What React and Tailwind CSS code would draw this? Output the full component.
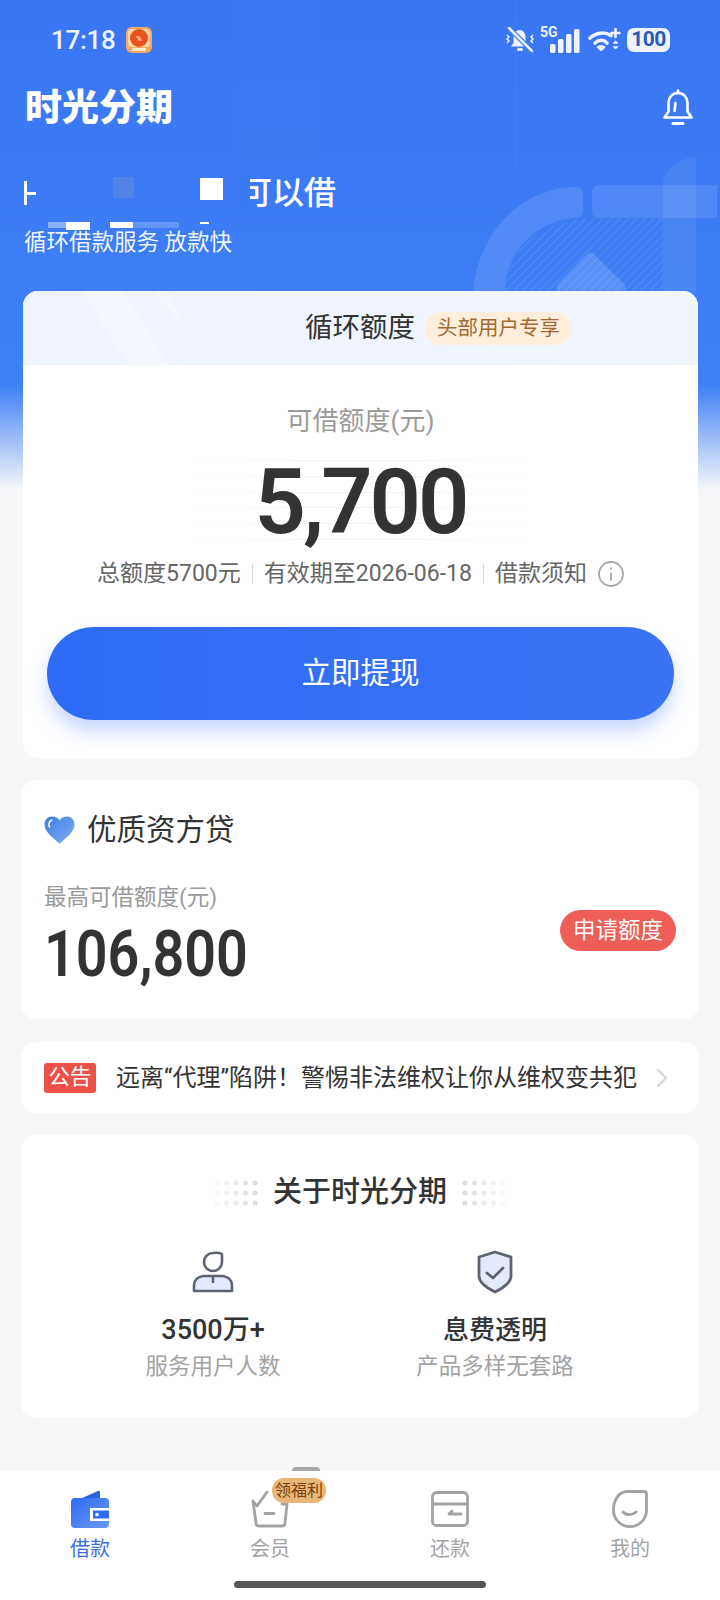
import React from 'react';

const gray = '#a3a3a3';

const AppIcon = () => (
  <svg width="26" height="26" viewBox="0 0 26 26">
    <rect width="26" height="26" rx="6" fill="#f6a95a" />
    <rect x="2" y="2" width="22" height="18" rx="4" fill="#fbd9ae" />
    <circle cx="13" cy="11" r="9" fill="#e9501c" />
    <text x="13" y="14" fontSize="8" fill="#fff" textAnchor="middle" fontFamily="Roboto">%</text>
    <rect x="6" y="21" width="14" height="3" rx="1" fill="#fde9cf" />
  </svg>
);

const MuteBell = () => (
  <svg width="30" height="27" viewBox="0 0 30 27" fill="#eef3ff">
    <path d="M15 3c-4 0-6.500 3-6.500 7v6l-2.500 3.500h17L20.500 16v-6c0-4-2.500-7-5.500-7z" />
    <rect x="12" y="21" width="6" height="3" rx="1.500" />
    <path d="M4 1l23 23" stroke="#3a76f4" strokeWidth="5" />
    <path d="M4 1l23 23" stroke="#eef3ff" strokeWidth="2.500" strokeLinecap="round" />
    <path d="M2 8l2 2-2 2 2 2-2 2M28 8l-2 2 2 2-2 2 2 2" fill="none" stroke="#eef3ff" strokeWidth="1.500" />
  </svg>
);

const Signal = () => (
  <svg width="30" height="24" viewBox="0 0 30 24" fill="#eef3ff">
    <rect x="0" y="15" width="5.500" height="9" rx="1.500" />
    <rect x="8" y="10" width="5.500" height="14" rx="1.500" />
    <rect x="16" y="5" width="5.500" height="19" rx="1.500" />
    <rect x="24" y="0" width="5.500" height="24" rx="1.500" />
  </svg>
);

const Wifi = () => (
  <svg width="33" height="25" viewBox="0 0 33 25" fill="none" stroke="#eef3ff" strokeLinecap="round">
    <path d="M2 10c6-5.500 15-6.500 21-2.500" strokeWidth="3.600" />
    <path d="M7 15c4-3.500 8.500-3.500 12 0" strokeWidth="3.600" />
    <path d="M13 22.500l-3.600-3.400c2.200-1.600 5-1.600 7.200 0z" fill="#eef3ff" strokeWidth="1.500" strokeLinejoin="round" />
    <path d="M27.500 1v8M23.500 5h8" strokeWidth="2.600" />
    <path d="M25.500 15l2-2 2 2zM25.500 19l2 2 2-2z" fill="#eef3ff" strokeWidth="1" />
  </svg>
);

const Bell = () => (
  <svg width="32" height="37" viewBox="0 0 32 37" fill="none" stroke="#fff" strokeWidth="2.600" strokeLinecap="round" strokeLinejoin="round">
    <path d="M16 1.500v2.500" />
    <path d="M16 4c-6 0-9.500 4.500-9.500 10.500v8L2.500 28.500h27l-4-6v-8C25.500 8.500 22 4 16 4z" />
    <path d="M13.500 14l-1 8" />
    <path d="M11 34.500h10" strokeWidth="3" />
  </svg>
);

const Heart = () => (
  <svg width="31" height="28" viewBox="0 0 31 28">
    <defs>
      <linearGradient id="heart" x1="0" y1="0" x2="1" y2="1">
        <stop offset="0" stopColor="#3f7be8" />
        <stop offset="1" stopColor="#7fb0f2" />
      </linearGradient>
    </defs>
    <path d="M15.500 27.500C9 22 .5 16 .5 8.500.5 3.500 4 .5 8 .5c3.500 0 6 1.500 7.500 4 1.500-2.500 4-4 7.500-4 4 0 7.500 3 7.500 8 0 7.500-8.500 13.500-15 19z" fill="url(#heart)" />
    <path d="M8 4C5 5 4 8.500 5.500 11" fill="none" stroke="#fff" strokeWidth="1.500" strokeLinecap="round" />
  </svg>
);

const Dots = ({ reverse }) => (
  <svg width="44" height="26" viewBox="0 0 44 26" fill="#d9d9d9">
    {[0, 1, 2].map((row) =>
      [0, 1, 2, 3, 4].map((col) => (
        <circle
          key={`${row}-${col}`}
          cx={3 + col * 9.500}
          cy={3 + row * 10}
          r="2.500"
          opacity={reverse ? 0.9 - col * 0.18 : 0.18 + col * 0.18}
        />
      ))
    )}
  </svg>
);

const UserIcon = () => (
  <svg width="42" height="42" viewBox="0 0 42 42" fill="none" stroke="#5d6470" strokeWidth="2.600" strokeLinejoin="round">
    <path d="M3 31c3-5 7-6 18-6s15 1 18 6v6c0 2-1 3-3 3H6c-2 0-3-1-3-3z" fill="#e3eafb" stroke="none" />
    <path d="M2 40v-6c0-5 4-8 9-9h20c5 1 9 4 9 9v6z" />
    <path d="M21 25v7" />
    <path d="M21 2c5-.500 9 0 9 2v7c0 5-4 9-9 9s-9-4-9-9 4-9 9-9z" fill="#fff" />
  </svg>
);

const ShieldIcon = () => (
  <svg width="36" height="44" viewBox="0 0 36 44" fill="none" stroke="#5d6470" strokeWidth="2.800" strokeLinejoin="round" strokeLinecap="round">
    <path d="M18 2L34 7v19c0 7-8 12-16 16C10 38 2 33 2 26V7z" fill="#e3eafb" />
    <path d="M10 23l6 5 10-10" />
  </svg>
);

const WalletIcon = () => (
  <svg width="40" height="38" viewBox="0 0 40 38">
    <defs>
      <linearGradient id="wallet" x1="0" y1="0" x2="1" y2="1">
        <stop offset="0" stopColor="#2f6cf3" />
        <stop offset="1" stopColor="#6a98f5" />
      </linearGradient>
    </defs>
    <path d="M10 9L28 1c1.500-.500 2 .500 2 2v7z" fill="#2c62df" />
    <rect x="1" y="8" width="38" height="30" rx="4" fill="url(#wallet)" />
    <rect x="20" y="18" width="19" height="13" fill="#fff" />
    <rect x="23" y="20.500" width="16" height="8" fill="#2f6cf3" />
    <circle cx="27" cy="24.500" r="1.800" fill="#fff" />
  </svg>
);

const BasketIcon = () => (
  <svg width="40" height="38" viewBox="0 0 40 38" fill="none" stroke={gray} strokeWidth="2.800" strokeLinecap="round" strokeLinejoin="round">
    <path d="M3 11l4 5 10-14M32 14h5l-2 19c0 2-1.500 3-3 3H9c-2 0-3-1-3-3L3 11" />
    <path d="M15 23.500h9" />
  </svg>
);

const RepayIcon = () => (
  <svg width="38" height="36" viewBox="0 0 38 36" fill="none" stroke={gray} strokeWidth="2.800" strokeLinecap="round" strokeLinejoin="round">
    <rect x="1.500" y="1.500" width="35" height="33" rx="4" />
    <path d="M1.500 13h35" />
    <path d="M18 23h12M21 20l-3 3" />
  </svg>
);

const FaceIcon = () => (
  <svg width="36" height="38" viewBox="0 0 36 38" fill="none" stroke={gray} strokeWidth="2.800" strokeLinecap="round" strokeLinejoin="round">
    <path d="M15 1.500h17c1.500 0 2.500 1 2.500 2.500v16c0 9-7 16.500-16.500 16.500S1.500 29 1.500 20 6.500 1.500 15 1.500z" />
    <path d="M11 22c3 3.500 9 3.500 13 0" />
  </svg>
);

const tabs = [
  { label: '借款', icon: <WalletIcon />, active: true },
  { label: '会员', icon: <BasketIcon /> },
  { label: '还款', icon: <RepayIcon /> },
  { label: '我的', icon: <FaceIcon /> },
];

const stripes = [0, 1, 2, 3, 4, 5];

const App = () => {
  return (
    <div className="relative flex flex-col w-[720px] h-[1600px] overflow-hidden bg-[linear-gradient(180deg,#3a76f4_0px,#3e80f6_385px,#f6f7f9_490px)] font-['Roboto','Noto_Sans_CJK_SC',sans-serif] text-[#333]">
      {/* Banner decoration */}
      <div className="absolute left-[234px] top-0 w-[86px] h-[160px] bg-white/[0.012]" />
      <div className="absolute left-[515px] top-0 w-px h-[170px] bg-white/[0.04]" />
      <svg className="absolute left-[470px] top-[155px]" width="250" height="140" viewBox="0 0 250 140" fill="#fff">
        <defs>
          <pattern id="hatch" width="6" height="6" patternUnits="userSpaceOnUse" patternTransform="rotate(45)">
            <rect width="2" height="6" fill="#fff" opacity=".07" />
          </pattern>
        </defs>
        <path d="M35 136C37 98 68 65 122 63h71v73z" fill="url(#hatch)" />
        <path d="M3 136C8 75 55 32 105 32c5 0 8 3 8 7v17c0 4-3 7-8 7-34 2-69 30-70 73H3z" opacity=".11" />
        <path d="M129 30h118v33H129c-4 0-7-3-7-7V37c0-4 3-7 7-7z" opacity=".1" />
        <path d="M193 30c0-12 8-22 29-28 3-1 4 1 4 5v133h-33z" opacity=".07" />
        <path d="M87 130l29-30c3-3 6-3 9 0l30 30v6H87z" opacity=".14" />
      </svg>

      {/* Status bar */}
      <div className="relative flex items-center h-[80px] pl-[51px] pr-[50px] text-[#eef3ff]">
        <span className="text-[26px] font-medium tracking-[-0.3px]">17:18</span>
        <div className="ml-[11px]">
          <AppIcon />
        </div>
        <div className="flex items-center ml-auto">
          <MuteBell />
          <div className="relative ml-[15px] mt-[2px]">
            <Signal />
            <span className="absolute left-[-10px] top-[-4px] text-[14px] leading-[14px] font-bold">5G</span>
          </div>
          <div className="ml-[8px]">
            <Wifi />
          </div>
          <div className="flex items-center justify-center ml-[6px] w-[43px] h-[24px] rounded-[7px] bg-[#eef3ff] text-[21px] font-bold text-[#2a5ab8] tracking-[-0.5px]">
            100
          </div>
        </div>
      </div>

      {/* App header */}
      <div className="relative flex items-center justify-between h-[54px] pl-[25px] pr-[26px]">
        <span className="mt-[3px] text-[37px] leading-[44px] font-black text-white">时光分期</span>
        <Bell />
      </div>

      {/* Headline, partly covered */}
      <div className="relative flex items-center h-[40px] mt-[39px] pl-[240px] text-[32px] font-medium text-white">
        <span>可以借</span>
        <div className="absolute left-[236px] top-0 w-[14px] h-[40px] bg-[#3b7af5]" />
        <div className="absolute left-[24px] top-[8px] flex items-center">
          <div className="w-[3px] h-[24px] bg-white" />
          <div className="w-[9px] h-[3px] bg-white" />
        </div>
        <div className="absolute left-[113px] top-[4px] w-[21px] h-[21px] bg-[#5483e6]" />
        <div className="absolute left-[200px] top-[5px] w-[23px] h-[22px] bg-white" />
      </div>

      <div className="relative h-[30px] mt-[14px] pl-[24px] text-[22.500px] leading-[30px] text-white/95">
        循环借款服务 放款快
        <div className="absolute left-[48px] top-[-5px] w-[18px] h-[6px] bg-white/40" />
        <div className="absolute left-[66px] top-[-5px] w-[24px] h-[8px] bg-white" />
        <div className="absolute left-[110px] top-[-5px] w-[23px] h-[6px] bg-white" />
        <div className="absolute left-[133px] top-[-5px] w-[46px] h-[6px] bg-white/20" />
        <div className="absolute left-[200px] top-[-5px] w-[9px] h-[2px] bg-white" />
      </div>

      {/* Credit card */}
      <div className="relative ml-[23px] w-[675px] mt-[34px] overflow-hidden rounded-[15px] bg-white">
        <div className="relative flex items-center h-[74px] pl-[282px] gap-[10px] bg-[linear-gradient(90deg,#eef3fd,#f1f5fe)]">
          <svg className="absolute left-0 top-0" width="180" height="74" viewBox="0 0 180 74" fill="#fff">
            <path d="M60 0h40l45 74H105z" opacity=".35" />
            <path d="M130 0h14l20 40z" opacity=".3" />
          </svg>
          <span className="relative text-[27.500px] text-[#333]">循环额度</span>
          <span className="relative flex items-center justify-center w-[147px] h-[33px] rounded-full bg-[#fdeedc] text-[20.500px] text-[#a5692e]">
            头部用户专享
          </span>
        </div>
        <div className="mt-[39px] text-center text-[26px] leading-[34px] text-[#9a9a9a]">可借额度(元)</div>
        <div className="relative mt-[17px] h-[90px]">
          <div className="absolute left-[168px] right-[168px] top-[5px] bottom-[5px] flex flex-col justify-between">
            {stripes.map((line) => (
              <div key={line} className="h-px bg-[linear-gradient(90deg,transparent,#efefef,transparent)]" />
            ))}
          </div>
          <div className="relative pt-[3px] text-center text-[90px] leading-[90px] font-semibold tracking-[-3px] text-[#333]">5,700</div>
        </div>
        <div className="flex items-center justify-center mt-[14px] h-[30px] text-[23px] text-[#666]">
          <span>总额度5700元</span>
          <div className="w-px h-[20px] mx-[11px] bg-[#d5d5d5]" />
          <span>有效期至2026-06-18</span>
          <div className="w-px h-[20px] mx-[11px] bg-[#d5d5d5]" />
          <span>借款须知</span>
          <svg className="ml-[11px]" width="26" height="26" viewBox="0 0 26 26" fill="none" stroke="#a8a8a8" strokeWidth="1.800">
            <circle cx="13" cy="13" r="12" />
            <path d="M13 11.500v8M13 6.500v2" />
          </svg>
        </div>
        <div className="mx-[24px] mt-[38px] mb-[38px] flex items-center justify-center h-[93px] rounded-full bg-[linear-gradient(90deg,#2e6bf6,#3a74f5)] shadow-[0_12px_18px_rgba(60,115,240,0.28)] text-[29.500px] text-white">
          立即提现
        </div>
      </div>

      {/* Partner loan */}
      <div className="ml-[21px] w-[678px] mt-[22px] h-[239px] pt-[30px] pl-[23px] pr-[23px] rounded-[15px] bg-white">
        <div className="flex items-center h-[40px] gap-[12px]">
          <Heart />
          <span className="text-[29.500px] text-[#333]">优质资方贷</span>
        </div>
        <div className="flex items-center justify-between mt-[32px]">
          <div>
            <div className="h-[30px] text-[22.500px] leading-[30px] text-[#9a9a9a]">最高可借额度(元)</div>
            <div className="mt-[8px] h-[70px] origin-left scale-x-[0.87] text-[64px] leading-[70px] font-semibold text-[#333]">106,800</div>
          </div>
          <div className="flex items-center justify-center w-[116px] h-[41px] mb-[11px] rounded-full bg-[#ee5d56] text-[22.500px] text-white">
            申请额度
          </div>
        </div>
      </div>

      {/* Notice */}
      <div className="flex items-center ml-[21px] w-[678px] mt-[23px] h-[71px] pl-[23px] rounded-[15px] bg-white">
        <span className="flex items-center justify-center w-[52px] h-[30px] rounded-[3px] bg-[#ec5049] text-[21.500px] text-white">公告</span>
        <span className="ml-[20px] text-[24px] text-[#333] whitespace-nowrap">远离“代理”陷阱！警惕非法维权让你从维权变共犯</span>
        <svg className="ml-[19px]" width="12" height="20" viewBox="0 0 12 20" fill="none" stroke="#d8d8d8" strokeWidth="2.400" strokeLinecap="round" strokeLinejoin="round">
          <path d="M2 2l8 8-8 8" />
        </svg>
      </div>

      {/* About */}
      <div className="ml-[21px] w-[678px] mt-[22px] h-[283px] pt-[38px] rounded-[15px] bg-white">
        <div className="flex items-center justify-center h-[40px] gap-[15px] text-[29px] font-medium text-[#333]">
          <Dots />
          <span>关于时光分期</span>
          <Dots reverse />
        </div>
        <div className="grid grid-cols-2 mt-[37px] pl-[51px] pr-[63px] text-center">
          {[
            { icon: <UserIcon />, title: '3500万+', titleSize: 'text-[27px]', desc: '服务用户人数' },
            { icon: <ShieldIcon />, title: '息费透明', titleSize: 'text-[26px]', desc: '产品多样无套路' },
          ].map((item) => (
            <div key={item.desc} className="flex flex-col items-center">
              <div className="flex items-center justify-center h-[44px]">{item.icon}</div>
              <div className={`mt-[19px] h-[34px] leading-[34px] font-medium text-[#333] ${item.titleSize}`}>{item.title}</div>
              <div className="mt-[4px] h-[30px] text-[22.500px] leading-[30px] text-[#a3a3a3]">{item.desc}</div>
            </div>
          ))}
        </div>
      </div>

      <div className="flex-1" />

      {/* Tab bar */}
      <div className="relative h-[129px] bg-white">
        <div className="absolute left-[292px] top-[-4px] w-[28px] h-[4px] rounded-t-[6px] bg-[#a8a8a8]" />
        <div className="grid grid-cols-4 pt-[18px]">
          {tabs.map((tab) => (
            <div key={tab.label} className="flex flex-col items-center">
              <div className="flex items-center justify-center h-[40px]">{tab.icon}</div>
              <span className={`mt-[6px] text-[20px] leading-[28px] ${tab.active ? 'text-[#3a6fe0]' : 'text-[#a3a3a3]'}`}>{tab.label}</span>
            </div>
          ))}
        </div>
        <div className="absolute left-[272px] top-[7px] flex items-center justify-center w-[54px] h-[25px] rounded-[12px] bg-[#e8b777] text-[16px] text-[#7a3f10]">
          领福利
        </div>
        <div className="absolute left-[234px] bottom-[12px] w-[252px] h-[7px] rounded-full bg-[#555]" />
      </div>
    </div>
  );
};

export default App;
